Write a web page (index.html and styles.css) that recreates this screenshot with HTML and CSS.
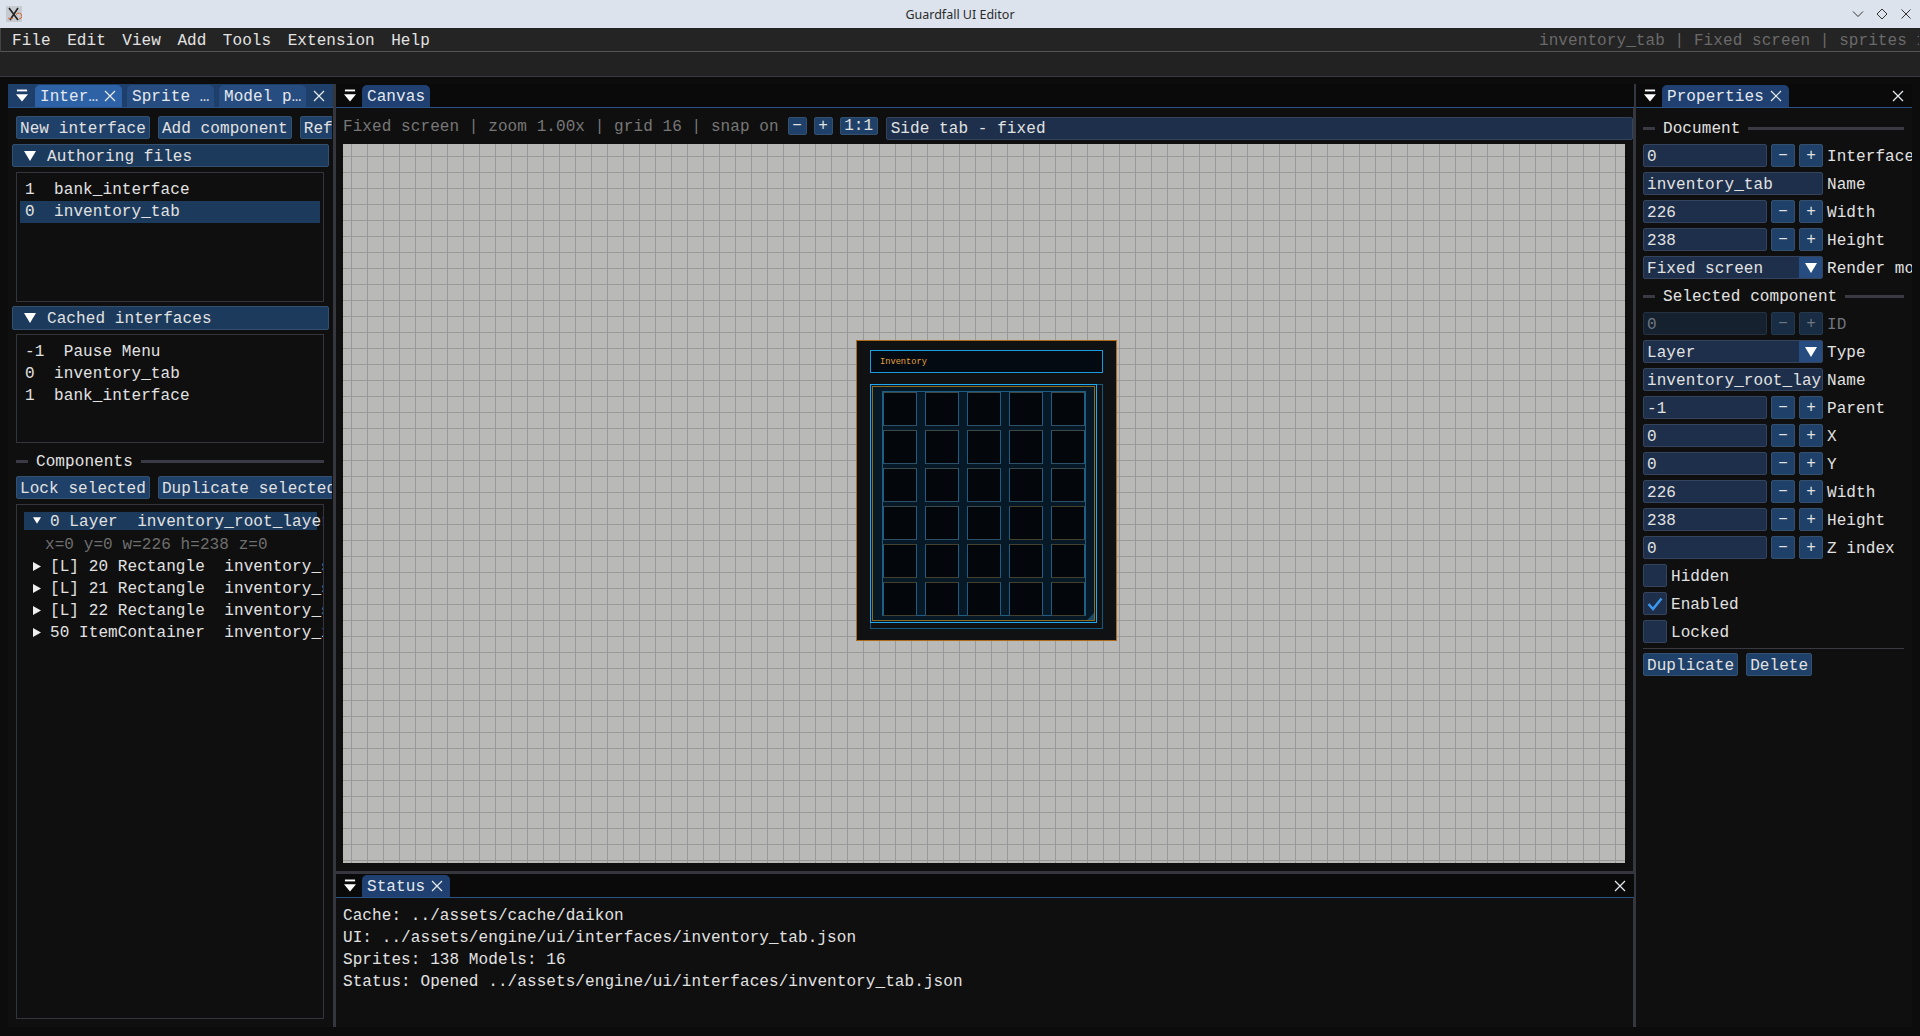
FILE: index.html
```html
<!DOCTYPE html>
<html lang="en">
<head>
  <meta charset="UTF-8">
  <meta name="viewport" content="width=device-width, initial-scale=1.0">
  <title>Guardfall UI Editor</title>
  <link rel="stylesheet" href="styles.css">
</head>
<body>
  <svg class="defs" width="0" height="0" aria-hidden="true">
    <symbol id="tab-menu" viewBox="0 0 13 14">
      <rect x="1" y="0" width="11" height="2" fill="#fff"/>
      <path d="M0 5h13l-6.5 8z" fill="#fff"/>
    </symbol>
    <symbol id="close" viewBox="0 0 12 12">
      <path d="M1 1l10 10M11 1L1 11" stroke="#e8edf2" stroke-width="1.2" fill="none"/>
    </symbol>
    <symbol id="arrow-down" viewBox="0 0 12 10">
      <path d="M0 0h12l-6 10z" fill="#fff"/>
    </symbol>
    <symbol id="arrow-right" viewBox="0 0 8 9">
      <path d="M0 0l8 4.5L0 9z" fill="#eee"/>
    </symbol>
  </svg>

  <header class="titlebar">
    <svg class="app-icon" viewBox="0 0 16 16">
      <rect width="16" height="16" rx="1" fill="#c6cbd2"/>
      <path d="M3 2l9 12M12 2L4 14" stroke="#222" stroke-width="1.6" fill="none"/>
      <path d="M10 9a3 3 0 1 1 3 4M2 12c2 1 4 1 5 0" stroke="#d8642a" stroke-width="1" fill="none"/>
    </svg>
    <span class="title">Guardfall UI Editor</span>
    <div class="window-buttons">
      <svg viewBox="0 0 12 12"><path d="M1 3.5l5 5 5-5" stroke="#333" fill="none"/></svg>
      <svg viewBox="0 0 12 12"><path d="M6 1l5 5-5 5-5-5z" stroke="#333" fill="none"/></svg>
      <svg viewBox="0 0 12 12"><path d="M1.5 1.5l9 9M10.5 1.5l-9 9" stroke="#333" fill="none"/></svg>
    </div>
  </header>

  <nav class="menubar">
    <span>File</span><span>Edit</span><span>View</span><span>Add</span><span>Tools</span><span>Extension</span><span>Help</span>
    <span class="menu-info">inventory_tab | Fixed screen | sprites 138 | models 16</span>
  </nav>
  <div class="toolbar"></div>

  <main class="dock">
    <section class="panel left-panel">
      <div class="tabbar tabbar-blue">
        <svg class="tab-menu"><use href="#tab-menu"/></svg>
        <div class="tab tab-active tab-inter">Inter…<svg class="tab-x"><use href="#close"/></svg></div>
        <div class="tab tab-side">Sprite …</div>
        <div class="tab tab-side">Model p…</div>
        <svg class="bar-x"><use href="#close"/></svg>
      </div>
      <div class="left-body">
        <div class="button-row">
          <button class="btn">New interface</button>
          <button class="btn">Add component</button>
          <button class="btn">Refresh</button>
        </div>
        <div class="section-head"><svg class="head-arrow"><use href="#arrow-down"/></svg>Authoring files</div>
        <div class="listbox files-list">
          <div class="list-row">1  bank_interface</div>
          <div class="list-row list-selected">0  inventory_tab</div>
        </div>
        <div class="section-head cached-head"><svg class="head-arrow"><use href="#arrow-down"/></svg>Cached interfaces</div>
        <div class="listbox cached-list">
          <div class="list-row">-1  Pause Menu</div>
          <div class="list-row">0  inventory_tab</div>
          <div class="list-row">1  bank_interface</div>
        </div>
        <div class="separator components-sep"><i></i><span>Components</span><b></b></div>
        <div class="button-row">
          <button class="btn">Lock selected</button>
          <button class="btn">Duplicate selected</button>
        </div>
        <div class="listbox tree-list">
          <div class="tree-row tree-selected"><svg class="tree-down"><use href="#arrow-down"/></svg>0 Layer  inventory_root_layer</div>
          <div class="tree-detail">x=0 y=0 w=226 h=238 z=0</div>
          <div class="tree-row"><svg class="tree-right"><use href="#arrow-right"/></svg>[L] 20 Rectangle  inventory_slots_bg</div>
          <div class="tree-row"><svg class="tree-right"><use href="#arrow-right"/></svg>[L] 21 Rectangle  inventory_slots_inner</div>
          <div class="tree-row"><svg class="tree-right"><use href="#arrow-right"/></svg>[L] 22 Rectangle  inventory_slots_frame</div>
          <div class="tree-row"><svg class="tree-right"><use href="#arrow-right"/></svg>50 ItemContainer  inventory_items</div>
        </div>
      </div>
    </section>

    <div class="splitter"></div>

    <div class="center">
      <section class="panel canvas-panel">
        <div class="tabbar">
          <svg class="tab-menu"><use href="#tab-menu"/></svg>
          <div class="tab tab-canvas">Canvas</div>
        </div>
        <div class="canvas-body">
          <div class="canvas-tools">
            <span class="canvas-info">Fixed screen | zoom 1.00x | grid 16 | snap on</span>
            <button class="btn btn-small">−</button>
            <button class="btn btn-small">+</button>
            <button class="btn btn-ratio">1:1</button>
            <div class="preset-field">Side tab - fixed</div>
          </div>
          <div class="canvas">
            <div class="inv-root">
              <div class="inv-title">Inventory</div>
              <div class="inv-shadow"></div>
              <div class="inv-frame"></div>
              <div class="inv-inner">
                <div class="inv-corner"></div>
              </div>
              <div class="inv-slots" id="slots"></div>
            </div>
          </div>
        </div>
      </section>
      <div class="splitter-h"></div>
      <section class="panel status-panel">
        <div class="tabbar">
          <svg class="tab-menu"><use href="#tab-menu"/></svg>
          <div class="tab tab-status">Status<svg class="tab-x"><use href="#close"/></svg></div>
          <svg class="bar-x"><use href="#close"/></svg>
        </div>
        <div class="status-body">
          <div>Cache: ../assets/cache/daikon</div>
          <div>UI: ../assets/engine/ui/interfaces/inventory_tab.json</div>
          <div>Sprites: 138 Models: 16</div>
          <div>Status: Opened ../assets/engine/ui/interfaces/inventory_tab.json</div>
        </div>
      </section>
    </div>

    <div class="splitter splitter-right"></div>

    <section class="panel props-panel">
      <div class="tabbar">
        <svg class="tab-menu"><use href="#tab-menu"/></svg>
        <div class="tab tab-props">Properties<svg class="tab-x"><use href="#close"/></svg></div>
        <svg class="bar-x"><use href="#close"/></svg>
      </div>
      <div class="props-body">
        <div class="separator"><i></i><span>Document</span><b></b></div>
        <div class="prop"><div class="field">0</div><button class="step">−</button><button class="step">+</button><label>Interface</label></div>
        <div class="prop"><div class="field field-wide">inventory_tab</div><label>Name</label></div>
        <div class="prop"><div class="field">226</div><button class="step">−</button><button class="step">+</button><label>Width</label></div>
        <div class="prop"><div class="field">238</div><button class="step">−</button><button class="step">+</button><label>Height</label></div>
        <div class="prop"><div class="field field-wide field-select">Fixed screen<span class="select-arrow"><svg><use href="#arrow-down"/></svg></span></div><label>Render mode</label></div>
        <div class="separator"><i></i><span>Selected component</span><b></b></div>
        <div class="prop prop-disabled"><div class="field">0</div><button class="step">−</button><button class="step">+</button><label>ID</label></div>
        <div class="prop"><div class="field field-wide field-select">Layer<span class="select-arrow"><svg><use href="#arrow-down"/></svg></span></div><label>Type</label></div>
        <div class="prop"><div class="field field-wide">inventory_root_layer</div><label>Name</label></div>
        <div class="prop"><div class="field">-1</div><button class="step">−</button><button class="step">+</button><label>Parent</label></div>
        <div class="prop"><div class="field">0</div><button class="step">−</button><button class="step">+</button><label>X</label></div>
        <div class="prop"><div class="field">0</div><button class="step">−</button><button class="step">+</button><label>Y</label></div>
        <div class="prop"><div class="field">226</div><button class="step">−</button><button class="step">+</button><label>Width</label></div>
        <div class="prop"><div class="field">238</div><button class="step">−</button><button class="step">+</button><label>Height</label></div>
        <div class="prop"><div class="field">0</div><button class="step">−</button><button class="step">+</button><label>Z index</label></div>
        <div class="check"><span class="box"></span>Hidden</div>
        <div class="check"><span class="box"><svg viewBox="0 0 16 14"><path d="M1.5 7l4.5 5L14.5 1.5" stroke="#3d96ea" stroke-width="2.6" fill="none"/></svg></span>Enabled</div>
        <div class="check"><span class="box"></span>Locked</div>
        <div class="rule"></div>
        <div class="prop-buttons">
          <button class="btn">Duplicate</button>
          <button class="btn">Delete</button>
        </div>
      </div>
    </section>
  </main>

  <script>
    // 5 x 6 inventory slots
    const slots = document.getElementById('slots');
    for (let i = 0; i < 30; i++) {
      const slot = document.createElement('div');
      slot.className = i < 18 ? 'slot' : 'slot slot-low';
      slots.appendChild(slot);
    }
  </script>
</body>
</html>
```
FILE: styles.css
```css
* {
  margin: 0;
  padding: 0;
  box-sizing: border-box;
}

html, body {
  height: 100%;
  overflow: hidden;
}

body {
  display: flex;
  flex-direction: column;
  font-family: "Liberation Mono", monospace;
  font-size: 16px;
  letter-spacing: 0.08px;
  color: #e2e2e2;
  background-color: #0c0c0c;
  white-space: nowrap;
}

.defs {
  position: absolute;
}

button {
  font: inherit;
  letter-spacing: inherit;
  color: inherit;
  cursor: pointer;
}

/* Title bar */
.titlebar {
  flex: 0 0 28px;
  display: flex;
  align-items: center;
  position: relative;
  padding: 0 6px;
  background-color: #dce3ed;
}

.app-icon {
  width: 16px;
  height: 16px;
}

.title {
  position: absolute;
  left: 0;
  right: 0;
  text-align: center;
  font-family: "Noto Sans", sans-serif;
  font-size: 12.5px;
  letter-spacing: 0;
  color: #2b2b2b;
}

.window-buttons {
  margin-left: auto;
  display: flex;
  gap: 12px;
  padding-right: 2px;
}

.window-buttons svg {
  width: 12px;
  height: 12px;
}

/* Menu */
.menubar {
  flex: 0 0 24px;
  display: flex;
  align-items: center;
  gap: 16.4px;
  padding: 2px 0 0 11px;
  overflow: hidden;
  background-color: #242424;
  border-left: 1px solid #444;
  border-bottom: 1px solid #555;
}

.menu-info {
  position: absolute;
  left: 1539px;
  width: 380px;
  overflow: hidden;
  color: #6a6a6a;
}

.toolbar {
  flex: 0 0 25px;
  background-color: #222;
  border-bottom: 1px solid #3a3a44;
}

/* Dock */
.dock {
  flex: 1;
  min-height: 0;
  display: flex;
  padding: 7px 8px 9px;
}

.panel {
  display: flex;
  flex-direction: column;
  min-height: 0;
  overflow: hidden;
  background-color: #0f0f0f;
}

.left-panel {
  flex: 0 0 325px;
}

.props-panel {
  flex: 0 0 276px;
}

.center {
  flex: 1;
  min-width: 0;
  display: flex;
  flex-direction: column;
}

.splitter {
  flex: 0 0 3px;
  background-color: #36363e;
}

.splitter-right {
  margin-left: -1px;
}

.splitter-h {
  flex: 0 0 3px;
  background-color: #36363e;
}

/* Tabs */
.tabbar {
  flex: 0 0 24px;
  display: flex;
  align-items: flex-end;
  position: relative;
  padding-left: 8px;
  background-color: #0a0a0a;
  border-bottom: 1px solid #2a5488;
}

.tabbar-blue {
  background-color: #1f3f6b;
}

.tab-menu {
  flex: none;
  width: 12px;
  height: 14px;
  margin: 0 6px 4px 0;
}

.tab {
  flex: none;
  height: 22px;
  display: flex;
  align-items: center;
  padding: 2px 0 0 5px;
  border-radius: 5px 5px 0 0;
  background-color: #1f4070;
  color: #e4e9ef;
}

.tab-x {
  flex: none;
  width: 12px;
  height: 12px;
  margin-left: 6px;
  margin-top: -2px;
}

.bar-x {
  position: absolute;
  top: 6px;
  right: 8px;
  width: 12px;
  height: 12px;
}

.tab-active {
  background-color: #2d62a6;
}

.tab-inter {
  width: 87px;
  margin-left: 1px;
}

.tab-side {
  width: 87px;
  margin-left: 5px;
  background-color: #264c80;
}

.tab-canvas {
  width: 68px;
}

.tab-status {
  width: 88px;
}

.tab-props {
  width: 127px;
}

/* Shared controls */
.btn {
  height: 23px;
  flex: none;
  padding: 2px 3px 0;
  background-color: #1f4068;
  border: 1px solid #33506f;
  border-radius: 2px;
}

.separator {
  display: flex;
  align-items: center;
  height: 24px;
}

.separator i {
  flex: 0 0 12px;
  height: 3px;
  background-color: #3a3a44;
}

.separator span {
  padding: 2px 8px 0;
}

.separator b {
  flex: 1;
  height: 3px;
  background-color: #3a3a44;
}

/* Left panel */
.left-body {
  flex: 1;
  min-height: 0;
  display: flex;
  flex-direction: column;
  padding: 8px 1px 8px 8px;
  overflow: hidden;
}

.button-row {
  display: flex;
  flex: none;
  gap: 8px;
  overflow: hidden;
}

.section-head {
  flex: 0 0 23px;
  display: flex;
  align-items: center;
  width: 317px;
  margin: 5px 0 5px -4px;
  padding: 2px 0 0 11px;
  background-color: #1c3a5c;
  border: 1px solid #34506e;
  border-radius: 2px;
}

.head-arrow {
  flex: none;
  width: 12px;
  height: 10px;
  margin: -2px 11px 0 0;
}

.cached-head {
  margin-top: 4px;
  flex-basis: 24px;
  margin-bottom: 4px;
}

.listbox {
  width: 308px;
  flex: none;
  padding: 6px 3px;
  overflow: hidden;
  border: 1px solid #34343c;
}

.files-list {
  height: 130px;
}

.cached-list {
  height: 109px;
}

.tree-list {
  flex: 1;
  margin-top: 5px;
  padding: 7px 0;
}

.list-row {
  height: 22px;
  line-height: 23px;
  padding-left: 5px;
  white-space: pre;
}

.list-selected {
  background-color: #1c3a5c;
}

.components-sep {
  width: 308px;
  margin: 6px 0 3px;
}

.tree-row {
  position: relative;
  height: 22px;
  line-height: 23px;
  padding-left: 33px;
  white-space: pre;
}

.tree-selected {
  width: 293px;
  height: 18px;
  margin: 0 0 4px 7px;
  line-height: 21px;
  padding-left: 26px;
  background-color: #1c3a5c;
}

.tree-down {
  position: absolute;
  left: 9px;
  top: 5px;
  width: 8px;
  height: 7px;
}

.tree-right {
  position: absolute;
  left: 16px;
  top: 6px;
  width: 8px;
  height: 9px;
}

.tree-detail {
  height: 22px;
  line-height: 23px;
  padding-left: 28px;
  color: #6e6e6e;
}

/* Canvas panel */
.canvas-panel {
  flex: 1;
}

.canvas-body {
  flex: 1;
  min-height: 0;
  display: flex;
  flex-direction: column;
  padding: 9px 1px 8px 7px;
}

.canvas-tools {
  flex: 0 0 23px;
  display: flex;
  align-items: flex-start;
  gap: 7px;
  margin-bottom: 4px;
}

.canvas-info {
  margin-right: 2px;
  line-height: 20px;
  color: #777;
}

.btn-small {
  width: 19px;
  height: 18px;
  padding: 0;
  line-height: 15px;
}

.btn-ratio {
  width: 38px;
  height: 18px;
  padding: 0;
  line-height: 15px;
}

.preset-field {
  flex: 1;
  height: 23px;
  line-height: 22px;
  margin-left: 1px;
  padding-left: 4px;
  background-color: #1d2f4a;
  border: 1px solid #33445c;
  border-radius: 2px;
}

.canvas {
  flex: 1;
  position: relative;
  margin-right: 8px;
  background-color: #b9b9b7;
  background-image:
    linear-gradient(#999 1px, transparent 1px),
    linear-gradient(90deg, #999 1px, transparent 1px);
  background-size: 16px 16px;
  background-position: 0 12px, 8px 0;
}

/* Interface drawn on the canvas */
.inv-root {
  position: absolute;
  left: 513px;
  top: 196px;
  width: 261px;
  height: 301px;
  background-color: #101112;
  border: 1px solid #b06a1c;
}

.inv-title {
  position: absolute;
  left: 13px;
  top: 9px;
  width: 233px;
  height: 23px;
  padding: 0 0 0 9px;
  line-height: 23px;
  font-size: 8.7px;
  letter-spacing: 0;
  color: #e5a23c;
  background-color: #040a12;
  border: 1px solid #1a9be0;
}

.inv-shadow {
  position: absolute;
  left: 13px;
  top: 43px;
  width: 233px;
  height: 245px;
  border: 1px solid #14587f;
}

.inv-frame {
  position: absolute;
  left: 13px;
  top: 43px;
  width: 227px;
  height: 239px;
  background-color: #071827;
  border: 1px solid #1fa8f0;
}

.inv-inner {
  position: absolute;
  left: 15px;
  top: 45px;
  width: 223px;
  height: 235px;
  border: 1px solid #8f6a1a;
}

.inv-corner {
  position: absolute;
  right: 0;
  bottom: 0;
  width: 0;
  height: 0;
  border-left: 7px solid transparent;
  border-bottom: 7px solid #1d4a66;
}

.inv-slots {
  position: absolute;
  left: 25px;
  top: 50px;
  width: 204px;
  height: 225px;
  display: grid;
  grid-template-columns: repeat(5, 34px);
  grid-template-rows: repeat(6, 34px);
  column-gap: 8px;
  row-gap: 4px;
  border: 1px solid #1d5e85;
}

.slot {
  background-color: #03070c;
  border: 1px solid #1d5e85;
  border-top-color: #3a4a4a;
  border-bottom-color: #2c5068;
}

.slot-low {
  border-top-color: #44402c;
  border-bottom-color: #44402c;
}

/* Status panel */
.status-panel {
  flex: 0 0 153px;
}

.status-body {
  padding: 7px 7px;
  line-height: 22px;
}

/* Properties panel */
.props-body {
  flex: 1;
  display: flex;
  flex-direction: column;
  padding: 8px 8px 0 7px;
  overflow: hidden;
}

.props-body .separator {
  flex: 0 0 24px;
  margin: 0 0 4px;
}

.prop {
  flex: 0 0 23px;
  min-height: 0;
  display: flex;
  align-items: stretch;
  gap: 4px;
  margin-bottom: 5px;
}

.field {
  flex: 0 0 124px;
  line-height: 25px;
  padding-left: 3px;
  overflow: hidden;
  background-color: #1d2f4a;
  border: 1px solid #33445c;
  border-radius: 2px;
}

.field-wide {
  flex-basis: 180px;
}

.field-select {
  position: relative;
}

.select-arrow {
  position: absolute;
  top: 0;
  right: 0;
  bottom: 0;
  width: 23px;
  display: flex;
  align-items: center;
  justify-content: center;
  background-color: #264c80;
}

.select-arrow svg {
  width: 12px;
  height: 10px;
}

.step {
  flex: 0 0 24px;
  line-height: 20px;
  background-color: #1f4068;
  border: 1px solid #33506f;
  border-radius: 2px;
}

.prop label {
  line-height: 27px;
}

.prop-disabled {
  color: #6f7680;
}

.prop-disabled .field {
  background-color: #16212f;
  border-color: #253040;
}

.prop-disabled .step {
  background-color: #182c44;
  border-color: #24384e;
}

.check {
  flex: 0 0 23px;
  min-height: 0;
  display: flex;
  align-items: flex-start;
  gap: 4px;
  margin-bottom: 5px;
  line-height: 27px;
}

.box {
  flex: none;
  width: 24px;
  height: 23px;
  display: flex;
  align-items: center;
  justify-content: center;
  background-color: #1d2f4a;
  border: 1px solid #33445c;
  border-radius: 2px;
}

.box svg {
  width: 16px;
  height: 14px;
}

.rule {
  flex: 0 0 1px;
  background-color: #3a3a44;
}

.prop-buttons {
  display: flex;
  gap: 8px;
  margin-top: 4px;
}
```
